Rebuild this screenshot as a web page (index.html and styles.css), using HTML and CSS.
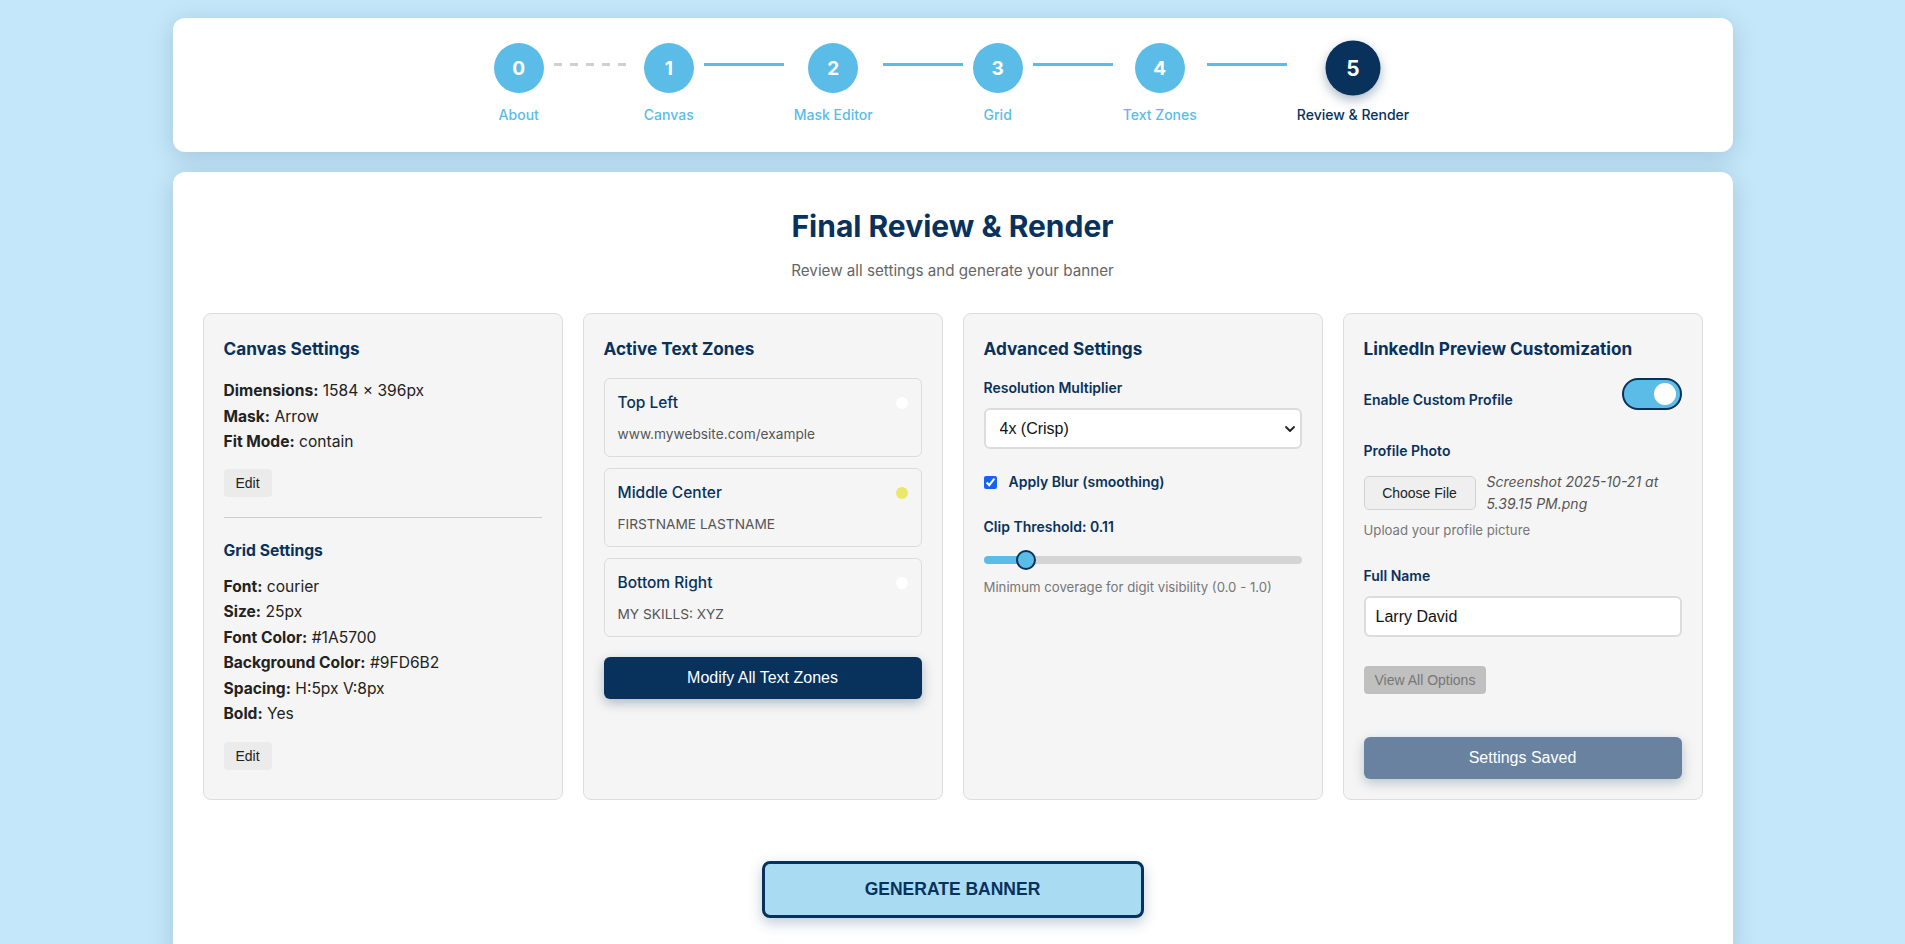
FILE: index.html
```html
<!DOCTYPE html>
<html lang="en">
<head>
<meta charset="utf-8">
<title>Final Review &amp; Render</title>
<link rel="stylesheet" href="styles.css">
</head>
<body>
<div class="page">
  <header class="card steps-card">
    <div class="steps">
      <div class="step done"><div class="circle">0</div><div class="step-label">About</div></div>
      <div class="connector dashed"></div>
      <div class="step done"><div class="circle">1</div><div class="step-label">Canvas</div></div>
      <div class="connector"></div>
      <div class="step done"><div class="circle">2</div><div class="step-label">Mask Editor</div></div>
      <div class="connector"></div>
      <div class="step done"><div class="circle">3</div><div class="step-label">Grid</div></div>
      <div class="connector"></div>
      <div class="step done"><div class="circle">4</div><div class="step-label">Text Zones</div></div>
      <div class="connector"></div>
      <div class="step active"><div class="circle">5</div><div class="step-label">Review &amp; Render</div></div>
    </div>
  </header>

  <main class="card main-card">
    <h1 class="title">Final Review &amp; Render</h1>
    <p class="subtitle">Review all settings and generate your banner</p>

    <div class="panels">
      <section class="panel">
        <h3 class="panel-title">Canvas Settings</h3>
        <div class="info">
          <p><b>Dimensions:</b> 1584 × 396px</p>
          <p><b>Mask:</b> Arrow</p>
          <p><b>Fit Mode:</b> contain</p>
        </div>
        <button class="edit-btn">Edit</button>
        <hr class="divider">
        <h4 class="sub-title">Grid Settings</h4>
        <div class="info">
          <p><b>Font:</b> courier</p>
          <p><b>Size:</b> 25px</p>
          <p><b>Font Color:</b> #1A5700</p>
          <p><b>Background Color:</b> #9FD6B2</p>
          <p><b>Spacing:</b> H:5px V:8px</p>
          <p><b>Bold:</b> Yes</p>
        </div>
        <button class="edit-btn edit-btn-2">Edit</button>
      </section>

      <section class="panel">
        <h3 class="panel-title">Active Text Zones</h3>
        <div class="zones">
          <div class="zone">
            <div>
              <div class="zone-name">Top Left</div>
              <div class="zone-text">www.mywebsite.com/example</div>
            </div>
            <span class="dot dot-white"></span>
          </div>
          <div class="zone">
            <div>
              <div class="zone-name">Middle Center</div>
              <div class="zone-text">FIRSTNAME LASTNAME</div>
            </div>
            <span class="dot dot-yellow"></span>
          </div>
          <div class="zone">
            <div>
              <div class="zone-name">Bottom Right</div>
              <div class="zone-text">MY SKILLS: XYZ</div>
            </div>
            <span class="dot dot-white"></span>
          </div>
        </div>
        <button class="primary-btn">Modify All Text Zones</button>
      </section>

      <section class="panel">
        <h3 class="panel-title">Advanced Settings</h3>
        <label class="field-label">Resolution Multiplier</label>
        <div class="select-wrap">
          <select class="select">
            <option>4x (Crisp)</option>
          </select>
          <svg class="chevron" width="12" height="8" viewBox="0 0 12 8"><path d="M2 2 L6 6 L10 2" fill="none" stroke="#222" stroke-width="1.8" stroke-linecap="round" stroke-linejoin="round"/></svg>
        </div>
        <label class="check-row"><input type="checkbox" checked> <span>Apply Blur (smoothing)</span></label>
        <label class="field-label clip-label">Clip Threshold: 0.11</label>
        <input class="range" type="range" min="0" max="1" step="0.01" value="0.11">
        <div class="helper helper-range">Minimum coverage for digit visibility (0.0 - 1.0)</div>
      </section>

      <section class="panel">
        <h3 class="panel-title">LinkedIn Preview Customization</h3>
        <div class="toggle-row">
          <span class="toggle-label">Enable Custom Profile</span>
          <span class="toggle"><span class="knob"></span></span>
        </div>
        <label class="field-label">Profile Photo</label>
        <div class="file-row">
          <button class="file-btn">Choose File</button>
          <span class="file-name">Screenshot 2025-10-21 at<br>5.39.15 PM.png</span>
        </div>
        <div class="helper helper-upload">Upload your profile picture</div>
        <label class="field-label name-label">Full Name</label>
        <input class="text-input" type="text" value="Larry David">
        <button class="options-btn">View All Options</button>
        <button class="saved-btn">Settings Saved</button>
      </section>
    </div>

    <div class="generate-wrap">
      <button class="generate">GENERATE BANNER</button>
    </div>
  </main>
</div>
</body>
</html>
```

FILE: styles.css
```css
* { box-sizing: border-box; }

html, body {
  margin: 0;
  padding: 0;
}

body {
  background: #c4e7f9;
  font-family: Inter, "Noto Sans", sans-serif;
  color: #222;
}

.page {
  max-width: 1560px;
  margin: 0 auto;
  padding: 18px 0 0;
}

.card {
  background: #fff;
  border-radius: 12px;
  box-shadow: 0 5px 25px rgba(0, 50, 90, 0.18);
}

/* ---------- steps ---------- */
.steps-card {
  padding: 25px 20px 27px;
}

.steps {
  display: flex;
  justify-content: center;
  align-items: flex-start;
  margin-left: -2px;
}

.step {
  display: flex;
  flex-direction: column;
  align-items: center;
}

.circle {
  width: 50px;
  height: 50px;
  border-radius: 50%;
  background: #5bbce8;
  color: #fff;
  font-weight: 700;
  font-size: 19px;
  display: flex;
  align-items: center;
  justify-content: center;
}

.step-label {
  margin-top: 12px;
  font-size: 14px;
  line-height: 20px;
  font-weight: 500;
  color: #5bbce8;
  white-space: nowrap;
}

.step.active .circle {
  background: #08325c;
  transform: scale(1.1);
  box-shadow: 0 4px 10px rgba(8, 50, 92, 0.35);
}

.step.active .step-label {
  color: #08325c;
}

.connector {
  width: 80px;
  height: 3px;
  margin: 20px 10px 0;
  background: #5bbce8;
}

.connector.dashed {
  background: repeating-linear-gradient(to right, #d0d0d0 0 8px, transparent 8px 16px);
}

/* ---------- main ---------- */
.main-card {
  margin-top: 20px;
  padding: 36px 30px 40px;
}

.title {
  margin: 0;
  text-align: center;
  font-size: 30px;
  line-height: 36px;
  font-weight: 700;
  color: #08325c;
}

.subtitle {
  margin: 15px 0 30px;
  text-align: center;
  font-size: 15.2px;
  line-height: 24px;
  color: #666;
}

.panels {
  display: grid;
  grid-template-columns: repeat(4, 1fr);
  gap: 20px;
}

.panel {
  background: #f5f5f5;
  border: 1px solid #ddd;
  border-radius: 8px;
  padding: 20px;
  display: flex;
  flex-direction: column;
  align-items: stretch;
}

.panel-title {
  margin: 0 0 14px;
  font-size: 17.2px;
  line-height: 30px;
  font-weight: 700;
  color: #08325c;
}

.info p {
  margin: 0;
  font-size: 15.6px;
  line-height: 25.5px;
  color: #222;
}

.info b {
  font-weight: 700;
}

.edit-btn {
  align-self: flex-start;
  margin-top: 14px;
  height: 28px;
  padding: 0 12px;
  border: 0;
  border-radius: 4px;
  background: #ebebeb;
  color: #222;
  font-family: "Liberation Sans", Arial, sans-serif;
  font-size: 14px;
}

.edit-btn-2 {
  margin-top: 15px;
}

.divider {
  border: 0;
  height: 1px;
  background: #cccccc;
  margin: 20px 0 23px;
}

.sub-title {
  margin: 0 0 13px;
  font-size: 15.7px;
  line-height: 20px;
  font-weight: 700;
  color: #08325c;
}

/* zones */
.zones {
  display: flex;
  flex-direction: column;
  gap: 11px;
}

.zone {
  display: flex;
  justify-content: space-between;
  align-items: flex-start;
  background: #f5f5f5;
  border: 1px solid #dcdcdc;
  border-radius: 6px;
  padding: 14px 13px 12px;
}

.zone-name {
  font-size: 15.5px;
  line-height: 20px;
  font-weight: 500;
  color: #08325c;
  margin-bottom: 11px;
}

.zone-text {
  font-size: 13.7px;
  line-height: 20px;
  color: #555;
}

.dot {
  width: 12px;
  height: 12px;
  border-radius: 50%;
  margin-top: 4px;
  flex: none;
}

.dot-white { background: #ffffff; }
.dot-yellow { background: #e9e86a; }

.primary-btn {
  margin-top: 20px;
  height: 42px;
  border: 0;
  border-radius: 6px;
  background: #08325c;
  color: #fff;
  font-family: "Liberation Sans", Arial, sans-serif;
  font-size: 16px;
  box-shadow: 0 4px 12px rgba(8, 50, 92, 0.3);
}

/* advanced */
.field-label {
  display: block;
  font-size: 14px;
  line-height: 20px;
  font-weight: 600;
  color: #08325c;
  margin-bottom: 10px;
}

.select-wrap {
  position: relative;
}

.select {
  -webkit-appearance: none;
  appearance: none;
  width: 100%;
  height: 41px;
  border: 2px solid #dcdcdc;
  border-radius: 6px;
  background: #fff;
  padding: 0 14px;
  font-family: "Liberation Sans", Arial, sans-serif;
  font-size: 16px;
  color: #111;
}

.chevron {
  position: absolute;
  right: 6px;
  top: 17px;
}

.check-row {
  display: flex;
  align-items: center;
  gap: 12px;
  margin-top: 23px;
  font-size: 14px;
  line-height: 20px;
  font-weight: 600;
  color: #08325c;
}

.check-row input {
  margin: 0;
  width: 13px;
  height: 13px;
  accent-color: #1463f3;
}

.clip-label {
  margin-top: 25px;
  margin-bottom: 0;
}

.range {
  -webkit-appearance: none;
  appearance: none;
  width: 100%;
  height: 8px;
  margin: 18.5px 0 0;
  border-radius: 4px;
  background: linear-gradient(to right, #5bbce8 0 13.5%, #d4d4d4 13.5% 100%);
  outline: none;
}

.range::-webkit-slider-thumb {
  -webkit-appearance: none;
  appearance: none;
  width: 20px;
  height: 20px;
  border-radius: 50%;
  background: #5bbce8;
  border: 2px solid #08325c;
}

.helper {
  margin-top: 12px;
  font-size: 13.2px;
  line-height: 18px;
  color: #777;
}

.helper-range {
  margin-top: 14px;
}

/* linkedin */
.toggle-row {
  display: flex;
  justify-content: space-between;
  align-items: flex-end;
  margin-bottom: 31px;
}

.toggle-label {
  font-size: 14px;
  line-height: 20px;
  font-weight: 600;
  color: #08325c;
}

.toggle {
  width: 60px;
  height: 32px;
  border: 2px solid #08325c;
  border-radius: 16px;
  background: #5bbce8;
  display: flex;
  align-items: center;
  justify-content: flex-end;
  padding: 0 4px;
}

.knob {
  width: 22px;
  height: 22px;
  border-radius: 50%;
  background: #fff;
}

.file-row {
  display: flex;
  align-items: center;
  gap: 11px;
}

.file-btn {
  width: 112px;
  height: 34px;
  flex: none;
  border: 1px solid #d2d2d2;
  border-radius: 5px;
  background: #efefef;
  color: #222;
  font-family: "Liberation Sans", Arial, sans-serif;
  font-size: 14px;
}

.file-name {
  font-size: 14px;
  line-height: 22px;
  font-style: italic;
  color: #555;
}

.helper-upload {
  margin-top: 6px;
}

.name-label {
  margin-top: 27px;
}

.text-input {
  width: 100%;
  height: 41px;
  border: 2px solid #dcdcdc;
  border-radius: 6px;
  background: #fff;
  padding: 0 10px;
  font-family: "Liberation Sans", Arial, sans-serif;
  font-size: 16px;
  color: #111;
}

.options-btn {
  align-self: flex-start;
  margin-top: 29px;
  height: 28px;
  padding: 0 11px;
  border: 0;
  border-radius: 4px;
  background: #c0c0c0;
  color: #777;
  font-family: "Liberation Sans", Arial, sans-serif;
  font-size: 14px;
}

.saved-btn {
  margin-top: 43px;
  height: 42px;
  border: 0;
  border-radius: 6px;
  background: #6882a0;
  color: #fff;
  font-family: "Liberation Sans", Arial, sans-serif;
  font-size: 16px;
  box-shadow: 0 4px 12px rgba(8, 50, 92, 0.25);
}

/* generate */
.generate-wrap {
  display: flex;
  justify-content: center;
  margin-top: 61px;
}

.generate {
  width: 382px;
  height: 57px;
  border: 3px solid #08325c;
  border-radius: 8px;
  background: #a9dcf2;
  color: #08325c;
  font-family: "Liberation Sans", Arial, sans-serif;
  font-weight: 700;
  font-size: 17.5px;
  box-shadow: 0 5px 14px rgba(8, 50, 92, 0.25);
}
```
